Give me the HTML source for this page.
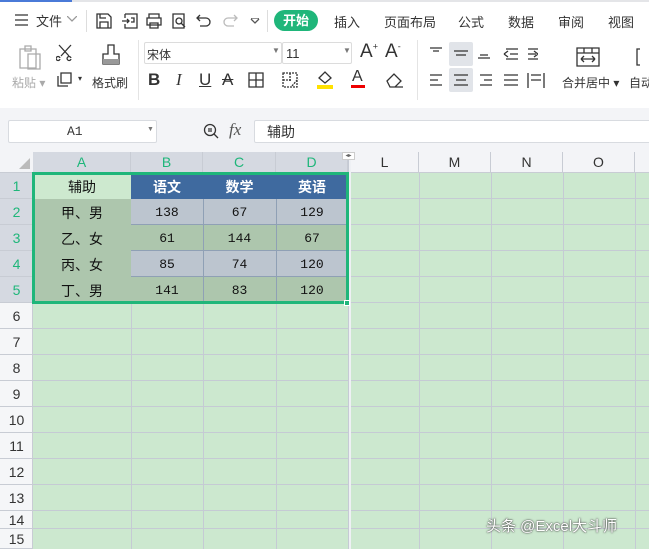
<!DOCTYPE html><html><head><meta charset="utf-8"><style>
*{margin:0;padding:0;box-sizing:border-box}
body{width:649px;height:549px;overflow:hidden;background:#f3f4f7;font-family:"Liberation Sans","Noto Sans CJK SC",sans-serif;position:relative;color:#333}
.a{position:absolute}
.t{font-size:12px;color:#333;white-space:nowrap}
svg{position:absolute;fill:none;stroke:#333;stroke-width:1.3}
.ch{position:absolute;top:152px;height:21px;font-size:14px;text-align:center;line-height:21px;color:#333;border-right:1px solid #c8ccd4}
.rh{position:absolute;left:0;width:33px;font-size:14px;text-align:center;color:#333;border-bottom:1px solid #c8ccd4}
.c{position:absolute;font-size:13px;text-align:center;font-family:"Liberation Mono","Noto Sans CJK SC",monospace;color:#111}
.hl{position:absolute;left:33px;width:616px;height:1px;background:#c5cad4}
</style></head><body>
<div class="a" style="left:0;top:0;width:649px;height:108px;background:#fff"></div>
<div class="a" style="left:0;top:0;width:72px;height:2px;background:#4a7ad8"></div>
<div class="a" style="left:72px;top:0;width:577px;height:2px;background:#e4e5e8"></div>
<svg style="left:15px;top:14px" width="14" height="12"><path d="M0 1H13M0 6H13M0 11H13"/></svg>
<div class="a t" style="left:36px;top:11px;font-size:13px">文件</div>
<svg style="left:67px;top:16px" width="10" height="6" ><path d="M0 0L5 5L10 0" stroke="#999"/></svg>
<div class="a" style="left:86px;top:10px;width:1px;height:22px;background:#ddd"></div>
<svg style="left:96px;top:13px" width="16" height="16"><path d="M1 1H12L15 4V15H1Z M4 15V9H12V15 M4 1V5H10"/></svg>
<svg style="left:122px;top:13px" width="16" height="16"><path d="M3 1H15V15H3V11 M3 5V1 M0 8H7M5 6L7 8L5 10 M9 5H12V9H9"/></svg>
<svg style="left:146px;top:13px" width="16" height="16"><path d="M3 5V1H13V5 M1 5H15V12H1Z M4 10H12V15H4Z"/></svg>
<svg style="left:172px;top:13px" width="16" height="16"><path d="M1 1H12V15H1Z M7 5a3 3 0 1 1 0 6a3 3 0 1 1 0-6 M9 10L13 14"/></svg>
<svg style="left:196px;top:13px" width="16" height="16"><path d="M1 5H10a4 4 0 0 1 0 8H4 M4 2L1 5L4 8"/></svg>
<svg style="left:222px;top:13px" width="16" height="16"><path d="M15 5H6a4 4 0 0 0 0 8H12 M12 2L15 5L12 8" stroke="#bbb"/></svg>
<svg style="left:250px;top:18px" width="10" height="8"><path d="M1 1L5 5L9 1M1 0H9" stroke="#555"/></svg>
<div class="a" style="left:267px;top:10px;width:1px;height:22px;background:#ddd"></div>
<div class="a" style="left:274px;top:10px;width:44px;height:21px;border-radius:11px;background:#1fb67a;color:#fff;font-size:13px;text-align:center;line-height:21px;font-weight:bold">开始</div>
<div class="a t" style="left:334px;top:12px;font-size:13px">插入</div>
<div class="a t" style="left:384px;top:12px;font-size:13px">页面布局</div>
<div class="a t" style="left:458px;top:12px;font-size:13px">公式</div>
<div class="a t" style="left:508px;top:12px;font-size:13px">数据</div>
<div class="a t" style="left:558px;top:12px;font-size:13px">审阅</div>
<div class="a t" style="left:608px;top:12px;font-size:13px">视图</div>
<svg style="left:18px;top:44px" width="24" height="26"><path d="M2 5H18V24H2Z M7 2H13V7H7Z M10 10H22V25H10Z" stroke="#aaa"/></svg>
<div class="a t" style="left:12px;top:74px;color:#aaa">粘贴 ▾</div>
<svg style="left:56px;top:44px" width="18" height="18"><path d="M3 1L13 12M15 1L5 12 M4 15a2 2 0 1 1 0-1 M15 15a2 2 0 1 1 0-1"/></svg>
<svg style="left:57px;top:72px" width="20" height="16"><path d="M4 1H14V11H4Z M1 4V14H11" /></svg>
<div class="a t" style="left:78px;top:74px;font-size:8px">▾</div>
<svg style="left:100px;top:44px" width="22" height="26"><path d="M8 1H14V10H19V20H3V10H8Z" /><rect x="3" y="15" width="16" height="5" fill="#999" stroke="none"/></svg>
<div class="a t" style="left:92px;top:74px">格式刷</div>
<div class="a" style="left:138px;top:40px;width:1px;height:60px;background:#e4e4e4"></div>
<div class="a" style="left:144px;top:42px;width:138px;height:22px;border:1px solid #dcdcdc;border-radius:2px"></div>
<div class="a t" style="left:147px;top:46px">宋体</div>
<div class="a t" style="left:272px;top:46px;font-size:8px;color:#777">▼</div>
<div class="a" style="left:282px;top:42px;width:70px;height:22px;border:1px solid #dcdcdc;border-radius:2px"></div>
<div class="a t" style="left:286px;top:46px;font-size:13px">11</div>
<div class="a t" style="left:343px;top:46px;font-size:8px;color:#777">▼</div>
<div class="a t" style="left:360px;top:41px;font-size:19px">A<sup style="font-size:9px">+</sup></div>
<div class="a t" style="left:385px;top:41px;font-size:19px">A<sup style="font-size:9px">-</sup></div>
<div class="a t" style="left:148px;top:70px;font-size:17px;font-weight:bold">B</div>
<div class="a t" style="left:176px;top:70px;font-size:17px;font-style:italic;font-family:'Liberation Serif'">I</div>
<div class="a t" style="left:199px;top:70px;font-size:17px;text-decoration:underline">U</div>
<div class="a t" style="left:222px;top:70px;font-size:17px;text-decoration:line-through">A</div>
<svg style="left:248px;top:72px" width="16" height="16"><path d="M1 1H15V15H1Z M8 1V15 M1 8H15"/></svg>
<svg style="left:282px;top:72px" width="18" height="16"><path d="M1 1H15V15H1Z M1 8H9 M8 1V9 M10 14L16 7" stroke-dasharray="2 1"/></svg>
<svg style="left:316px;top:70px" width="18" height="20"><path d="M3 8L9 2L15 8L9 13Z"/><rect x="1" y="15" width="16" height="4" fill="#ffe100" stroke="none"/></svg>
<div class="a t" style="left:352px;top:68px;font-size:16px">A</div>
<div class="a" style="left:351px;top:85px;width:14px;height:3px;background:#e00"></div>
<svg style="left:386px;top:72px" width="18" height="16"><path d="M1 9L8 2L15 9L9 15H4Z M4 15H17"/></svg>
<div class="a" style="left:417px;top:40px;width:1px;height:60px;background:#e4e4e4"></div>
<div class="a" style="left:449px;top:42px;width:24px;height:24px;background:#e1e4e9;border-radius:2px"></div>
<div class="a" style="left:449px;top:68px;width:24px;height:24px;background:#e1e4e9;border-radius:2px"></div>
<svg style="left:428px;top:46px" width="110" height="16"><path d="M2 2H14M5 5H11 M26 5H40M28 9H38 M50 12H62M52 9H60 M78 3H90M82 8H90M78 13H90M76 8L80 5M76 8L80 11 M100 3H112M100 8H108M100 13H112M110 8L106 5M110 8L106 11"/></svg>
<svg style="left:428px;top:72px" width="120" height="18"><path d="M2 3H14M2 8H10M2 13H14 M26 3H40M28 8H38M26 13H40 M52 3H64M56 8H64M52 13H64 M76 3H90M76 8H90M76 13H90 M100 1V16M116 1V16M103 8H113M103 3H113"/></svg>
<svg style="left:576px;top:47px" width="24" height="20"><path d="M1 1H23V19H1Z M1 6H23 M8 1V6M16 1V6 M5 12H19M5 12L8 9M5 12L8 15M19 12L16 9M19 12L16 15"/></svg>
<div class="a t" style="left:562px;top:74px">合并居中 ▾</div>
<div class="a t" style="left:629px;top:74px">自动</div>
<svg style="left:636px;top:48px" width="10" height="18"><path d="M4 1H1V17H4"/></svg>
<div class="a" style="left:8px;top:120px;width:149px;height:23px;background:#fff;border:1px solid #d8dbe0;border-radius:2px"></div>
<div class="a" style="left:67px;top:124px;font-size:13px;font-family:'Liberation Mono',monospace">A1</div>
<div class="a t" style="left:147px;top:126px;font-size:7px;color:#777">▼</div>
<svg style="left:203px;top:123px" width="16" height="16"><circle cx="7" cy="7" r="5.5"/><path d="M5 6H9M5 8H9M11 11L15 15"/></svg>
<div class="a" style="left:229px;top:120px;font-size:17px;font-style:italic;font-family:'Liberation Serif',serif;color:#555">fx</div>
<div class="a" style="left:254px;top:120px;width:400px;height:23px;background:#fff;border:1px solid #d8dbe0;border-radius:2px"></div>
<div class="a" style="left:267px;top:122px;font-size:14px">辅助</div>
<!-- grid -->
<div class="a" style="left:33px;top:173px;width:616px;height:376px;background:#cce8cf"></div>
<div class="hl" style="top:198px"></div><div class="hl" style="top:224px"></div><div class="hl" style="top:250px"></div><div class="hl" style="top:276px"></div><div class="hl" style="top:302px"></div>
<div class="hl" style="top:328px"></div><div class="hl" style="top:354px"></div><div class="hl" style="top:380px"></div><div class="hl" style="top:406px"></div><div class="hl" style="top:432px"></div>
<div class="hl" style="top:458px"></div><div class="hl" style="top:484px"></div><div class="hl" style="top:510px"></div><div class="hl" style="top:528px"></div>
<div class="a" style="left:0;top:152px;width:649px;height:21px;background:#f3f4f7;border-bottom:1px solid #c8ccd4"></div>
<div class="a" style="left:33px;top:152px;width:315px;height:21px;background:#d5d9e1"></div>
<div class="a" style="left:0;top:173px;width:33px;height:376px;background:#f5f6f8;border-right:1px solid #c8ccd4"></div>
<div class="a" style="left:0;top:173px;width:33px;height:130px;background:#d5d9e1"></div>
<div class="a" style="left:19px;top:158px;width:0;height:0;border-left:11px solid transparent;border-bottom:11px solid #bbb"></div>
<div class="a" style="left:131px;top:173px;width:1px;height:376px;background:#c5cad4"></div>
<div class="a" style="left:203px;top:173px;width:1px;height:376px;background:#c5cad4"></div>
<div class="a" style="left:276px;top:173px;width:1px;height:376px;background:#c5cad4"></div>
<div class="a" style="left:348px;top:152px;width:3px;height:397px;background:#eef0f4;border-left:1px solid #c5cad4"></div>
<div class="a" style="left:419px;top:173px;width:1px;height:376px;background:#c5cad4"></div>
<div class="a" style="left:491px;top:173px;width:1px;height:376px;background:#c5cad4"></div>
<div class="a" style="left:563px;top:173px;width:1px;height:376px;background:#c5cad4"></div>
<div class="a" style="left:635px;top:173px;width:1px;height:376px;background:#c5cad4"></div>
<div class="ch" style="left:33px;width:98px;color:#1fb67a">A</div>
<div class="ch" style="left:131px;width:72px;color:#1fb67a">B</div>
<div class="ch" style="left:203px;width:73px;color:#1fb67a">C</div>
<div class="ch" style="left:276px;width:72px;color:#1fb67a">D</div>
<div class="a" style="left:342px;top:152px;width:13px;height:8px;background:#fff;border:1px solid #ccc;font-size:6px;line-height:6px;text-align:center;color:#666">◂▸</div>
<div class="ch" style="left:351px;width:68px">L</div>
<div class="ch" style="left:419px;width:72px">M</div>
<div class="ch" style="left:491px;width:72px">N</div>
<div class="ch" style="left:563px;width:72px">O</div>
<div class="rh" style="top:173px;height:26px;line-height:26px;color:#1fb67a">1</div>
<div class="rh" style="top:199px;height:26px;line-height:26px;color:#1fb67a">2</div>
<div class="rh" style="top:225px;height:26px;line-height:26px;color:#1fb67a">3</div>
<div class="rh" style="top:251px;height:26px;line-height:26px;color:#1fb67a">4</div>
<div class="rh" style="top:277px;height:26px;line-height:26px;color:#1fb67a">5</div>
<div class="rh" style="top:303px;height:26px;line-height:26px">6</div>
<div class="rh" style="top:329px;height:26px;line-height:26px">7</div>
<div class="rh" style="top:355px;height:26px;line-height:26px">8</div>
<div class="rh" style="top:381px;height:26px;line-height:26px">9</div>
<div class="rh" style="top:407px;height:26px;line-height:26px">10</div>
<div class="rh" style="top:433px;height:26px;line-height:26px">11</div>
<div class="rh" style="top:459px;height:26px;line-height:26px">12</div>
<div class="rh" style="top:485px;height:26px;line-height:26px">13</div>
<div class="rh" style="top:511px;height:18px;line-height:18px">14</div>
<div class="rh" style="top:529px;height:20px;line-height:20px">15</div>
<div class="a" style="left:33px;top:173px;width:98px;height:26px;background:#cde9cf"></div>
<div class="a" style="left:131px;top:173px;width:217px;height:26px;background:#3f6a9f"></div>
<div class="a" style="left:33px;top:199px;width:98px;height:104px;background:#adc6ad"></div>
<div class="a" style="left:131px;top:199px;width:217px;height:26px;background:#bcc5cf;border-bottom:1px solid #8fa0b5"></div>
<div class="a" style="left:131px;top:225px;width:217px;height:26px;background:#adc6ad;border-bottom:1px solid #8fa0b5"></div>
<div class="a" style="left:131px;top:251px;width:217px;height:26px;background:#bcc5cf;border-bottom:1px solid #8fa0b5"></div>
<div class="a" style="left:131px;top:277px;width:217px;height:26px;background:#adc6ad"></div>
<div class="a" style="left:203px;top:199px;width:1px;height:104px;background:#8fa0b5"></div>
<div class="a" style="left:276px;top:199px;width:1px;height:104px;background:#8fa0b5"></div>
<div class="c" style="left:33px;top:177px;width:98px;font-size:14px">辅助</div>
<div class="c" style="left:131px;top:177px;width:72px;font-size:14px;color:#fff;font-weight:bold">语文</div>
<div class="c" style="left:203px;top:177px;width:73px;font-size:14px;color:#fff;font-weight:bold">数学</div>
<div class="c" style="left:276px;top:177px;width:72px;font-size:14px;color:#fff;font-weight:bold">英语</div>
<div class="c" style="left:33px;top:203px;width:98px;font-size:14px">甲、男</div>
<div class="c" style="left:33px;top:229px;width:98px;font-size:14px">乙、女</div>
<div class="c" style="left:33px;top:255px;width:98px;font-size:14px">丙、女</div>
<div class="c" style="left:33px;top:281px;width:98px;font-size:14px">丁、男</div>
<div class="c" style="left:131px;top:205px;width:72px">138</div><div class="c" style="left:203px;top:205px;width:73px">67</div><div class="c" style="left:276px;top:205px;width:72px">129</div>
<div class="c" style="left:131px;top:231px;width:72px">61</div><div class="c" style="left:203px;top:231px;width:73px">144</div><div class="c" style="left:276px;top:231px;width:72px">67</div>
<div class="c" style="left:131px;top:257px;width:72px">85</div><div class="c" style="left:203px;top:257px;width:73px">74</div><div class="c" style="left:276px;top:257px;width:72px">120</div>
<div class="c" style="left:131px;top:283px;width:72px">141</div><div class="c" style="left:203px;top:283px;width:73px">83</div><div class="c" style="left:276px;top:283px;width:72px">120</div>
<div class="a" style="left:32px;top:172px;width:317px;height:132px;border:3px solid #1fb67a"></div>
<div class="a" style="left:344px;top:300px;width:6px;height:6px;background:#1fb67a;border:1px solid #fff"></div>
<div class="a" style="left:486px;top:515px;font-size:15px;color:#fff;text-shadow:0 0 2px #444,0 0 1px #444">头条 @Excel大斗师</div>
</body></html>
